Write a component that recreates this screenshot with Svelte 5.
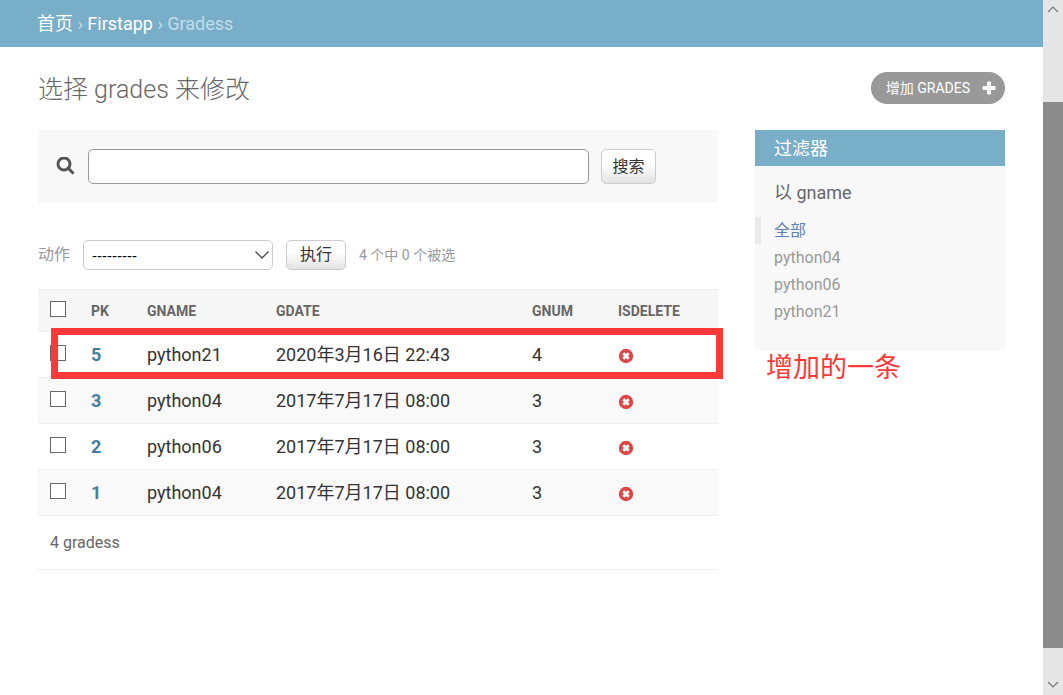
<script lang="ts">
  type Grade = { pk: number; gname: string; gdate: string; gnum: number };

  const rows: Grade[] = [
    { pk: 5, gname: 'python21', gdate: '2020年3月16日 22:43', gnum: 4 },
    { pk: 3, gname: 'python04', gdate: '2017年7月17日 08:00', gnum: 3 },
    { pk: 2, gname: 'python06', gdate: '2017年7月17日 08:00', gnum: 3 },
    { pk: 1, gname: 'python04', gdate: '2017年7月17日 08:00', gnum: 3 }
  ];
  const filters = ['全部', 'python04', 'python06', 'python21'];
  const added = 5;

  let query = $state('');
  let action = $state('');
  let active = $state('全部');
  let selected = $state<number[]>([]);

  function toggleAll(e: Event) {
    const box = e.currentTarget as HTMLInputElement;
    selected = box.checked ? rows.map((r) => r.pk) : [];
  }

  function pickFilter(e: MouseEvent, name: string) {
    e.preventDefault();
    active = name;
  }
</script>

<div class="window">
  <div class="page">
    <nav class="breadcrumbs">
      <a href="#home">首页</a> › <a href="#firstapp">Firstapp</a> › <span>Gradess</span>
    </nav>

    <main>
      <div class="title-row">
        <h1>选择 grades 来修改</h1>
        <a class="add" href="#add">
          增加 GRADES
          <svg width="14" height="14" viewBox="0 0 14 14" aria-hidden="true">
            <path fill="#fff" d="M5.8 0.5h2.4q.8 0 .8.8V5h3.7q.8 0 .8.8v2.4q0 .8-.8.8H9v3.7q0 .8-.8.8H5.8q-.8 0-.8-.8V9H1.3q-.8 0-.8-.8V5.8q0-.8.8-.8H5V1.3q0-.8.8-.8z" />
          </svg>
        </a>
      </div>

      <div class="content">
        <div class="changelist">
          <form class="search" onsubmit={(e) => e.preventDefault()}>
            <label for="searchbar" aria-label="搜索">
              <svg width="19" height="19" viewBox="0 0 19 19" aria-hidden="true">
                <circle cx="8" cy="7" r="6" fill="none" stroke="#555" stroke-width="3" />
                <path d="M12 11l4.700 4.700" stroke="#555" stroke-width="3" stroke-linecap="round" />
              </svg>
            </label>
            <input id="searchbar" type="text" bind:value={query} />
            <button type="submit">搜索</button>
          </form>

          <div class="actions">
            <label for="action">动作</label>
            <span class="select">
              <select id="action" bind:value={action}>
                <option value="">---------</option>
              </select>
              <svg width="16" height="10" viewBox="0 0 16 10" aria-hidden="true">
                <path d="M1.5 1.5L8 8l6.500-6.500" fill="none" stroke="#444" stroke-width="1.300" />
              </svg>
            </span>
            <button type="button">执行</button>
            <span class="counter">4 个中 {selected.length} 个被选</span>
          </div>

          <table>
            <colgroup>
              <col class="c-check" />
              <col class="c-pk" />
              <col class="c-name" />
              <col />
              <col class="c-num" />
              <col class="c-del" />
            </colgroup>
            <thead>
              <tr>
                <th><input type="checkbox" aria-label="全部" onchange={toggleAll} /></th>
                <th>PK</th>
                <th>GNAME</th>
                <th>GDATE</th>
                <th>GNUM</th>
                <th>ISDELETE</th>
              </tr>
            </thead>
            <tbody>
              {#each rows as row (row.pk)}
                <tr class:marked={row.pk === added}>
                  <td><input type="checkbox" value={row.pk} aria-label={String(row.pk)} bind:group={selected} /></td>
                  <td><a href="#{row.pk}">{row.pk}</a></td>
                  <td>{row.gname}</td>
                  <td>{row.gdate}</td>
                  <td>{row.gnum}</td>
                  <td>
                    <svg class="no" width="16" height="16" viewBox="0 0 16 16" aria-hidden="true">
                      <circle cx="8" cy="8" r="7.200" fill="#dd4646" />
                      <path d="M5.300 5.300l5.400 5.400M10.700 5.300l-5.400 5.400" stroke="#fff" stroke-width="2.800" />
                    </svg>
                  </td>
                </tr>
              {/each}
            </tbody>
          </table>
          <p class="paginator">4 gradess</p>
        </div>

        <aside>
          <h2>过滤器</h2>
          <h3>以 gname</h3>
          <ul>
            {#each filters as name}
              <li class:selected={active === name}>
                <a href="#{name}" onclick={(e) => pickFilter(e, name)}>{name}</a>
              </li>
            {/each}
          </ul>
          <span class="note">增加的一条</span>
        </aside>
      </div>
    </main>
  </div>

  <div class="scrollbar" aria-hidden="true">
    <svg width="20" height="20" viewBox="0 0 20 20"><path d="M5 12l5-5 5 5" /></svg>
    <div class="track">
      <div class="thumb"></div>
    </div>
    <svg width="20" height="20" viewBox="0 0 20 20"><path d="M5 7l5 5 5-5" /></svg>
  </div>
</div>

<style>
  :global(body) {
    background: #fff;
    color: #333;
    font-family: Roboto, 'Noto Sans CJK SC', sans-serif;
    font-size: 16px;
  }

  .window {
    display: flex;
    min-height: 100vh;
  }

  .page {
    flex: 1;
    min-width: 0;
  }

  a {
    text-decoration: none;
  }

  .breadcrumbs {
    padding: 0 37px;
    background: #79aec8;
    color: #c4dce8;
    font-size: 18px;
    line-height: 47px;
  }

  .breadcrumbs a {
    color: #fff;
  }

  main {
    padding: 25px 38px;
  }

  .title-row {
    display: flex;
    justify-content: space-between;
    align-items: flex-start;
    height: 58px;
  }

  h1 {
    margin: 0;
    color: #666;
    font-size: 25px;
    font-weight: 300;
    line-height: 36px;
  }

  .add {
    display: flex;
    align-items: center;
    gap: 12px;
    padding: 0 9px 0 15px;
    border-radius: 16px;
    background: #999;
    color: #fff;
    font-size: 14px;
    line-height: 32px;
  }

  .content {
    display: grid;
    grid-template-columns: 1fr 250px;
    gap: 37px;
    align-items: start;
  }

  .search {
    display: flex;
    align-items: center;
    padding: 19px 62px 19px 18px;
    background: #f8f8f8;
  }

  .search label {
    display: flex;
    margin-right: 13px;
  }

  .search input {
    flex: 1;
    min-width: 0;
    height: 35px;
    box-sizing: border-box;
    margin-right: 12px;
    padding: 0 8px;
    border: 1px solid #999;
    border-radius: 5px;
    font: inherit;
  }

  button {
    height: 30px;
    padding: 0;
    border: 1px solid #ccc;
    border-radius: 5px;
    background: linear-gradient(#fff 40%, #e2e2e2);
    color: #333;
    font: inherit;
    line-height: 28px;
    cursor: pointer;
  }

  .search button {
    width: 55px;
    height: 35px;
  }

  .actions {
    display: flex;
    align-items: center;
    gap: 13px;
    padding: 37px 0 19px;
    color: #999;
    line-height: 30px;
  }

  .select {
    position: relative;
    display: flex;
    width: 190px;
  }

  .select svg {
    position: absolute;
    top: 10px;
    right: 3px;
    pointer-events: none;
  }

  select {
    appearance: none;
    width: 100%;
    height: 30px;
    padding: 0 8px;
    border: 1px solid #ccc;
    border-radius: 5px;
    background: #fff;
    color: #000;
    font: 15px 'Liberation Sans', sans-serif;
  }

  .actions button {
    width: 60px;
  }

  .counter {
    font-size: 14px;
  }

  table {
    width: 100%;
    table-layout: fixed;
    border-collapse: separate;
    border-spacing: 0;
  }

  .c-check {
    width: 41px;
  }

  .c-pk {
    width: 56px;
  }

  .c-name {
    width: 129px;
  }

  .c-num {
    width: 86px;
  }

  .c-del {
    width: 112px;
  }

  th,
  td {
    height: 45px;
    padding: 0 0 0 12px;
    border-bottom: 1px solid #eee;
    text-align: left;
    vertical-align: middle;
    white-space: nowrap;
  }

  th {
    height: 41px;
    border-top: 1px solid #eee;
    background: #f6f6f6;
    color: #666;
    font-size: 14px;
    font-weight: 700;
  }

  td {
    font-size: 18px;
    line-height: 24px;
  }

  td a {
    color: #447e9b;
    font-weight: 700;
  }

  tbody tr:nth-child(even) {
    background: #f9f9f9;
  }

  input[type='checkbox'] {
    appearance: none;
    display: block;
    width: 16px;
    height: 16px;
    margin: 0 0 4px;
    border: 1px solid #666;
    background: #fff;
  }

  input[type='checkbox']:checked {
    background: #79aec8;
  }

  .no {
    display: block;
    margin-top: 2px;
  }

  .marked {
    position: relative;
  }

  .marked td:first-child::after {
    content: '';
    position: absolute;
    inset: -4px -5px -1px 13px;
    border: 7px solid #fd3838;
    pointer-events: none;
  }

  .paginator {
    margin: 0;
    padding: 0 12px;
    border-bottom: 1px solid #eee;
    color: #666;
    line-height: 53px;
  }

  aside {
    position: relative;
    padding-bottom: 26px;
    background: #f8f8f8;
  }

  h2 {
    margin: 0;
    padding: 2px 19px 0;
    background: #79aec8;
    color: #fff;
    font-size: 18px;
    font-weight: 400;
    line-height: 34px;
  }

  h3 {
    margin: 0;
    padding: 14px 19px 11px;
    color: #666;
    font-size: 18px;
    font-weight: 400;
    line-height: 26px;
  }

  ul {
    margin: 0;
    padding: 0;
    list-style: none;
  }

  li {
    padding-left: 13px;
    border-left: 6px solid transparent;
    line-height: 27px;
  }

  li a {
    color: #999;
  }

  .selected {
    border-left-color: #eaeaea;
  }

  .selected a {
    color: #5b80b2;
  }

  .note {
    position: absolute;
    top: 100%;
    left: 11px;
    color: #fd3838;
    font-size: 27px;
    line-height: 34px;
    white-space: nowrap;
  }

  .scrollbar {
    display: flex;
    flex-direction: column;
    width: 20px;
    background: #e6e6e6;
  }

  .scrollbar path {
    fill: none;
    stroke: #777;
    stroke-width: 1.2;
  }

  .track {
    display: grid;
    grid-template-rows: 82fr 546fr 27fr;
    flex: 1;
  }

  .thumb {
    grid-row: 2;
    background: #8b8b8b;
  }
</style>
